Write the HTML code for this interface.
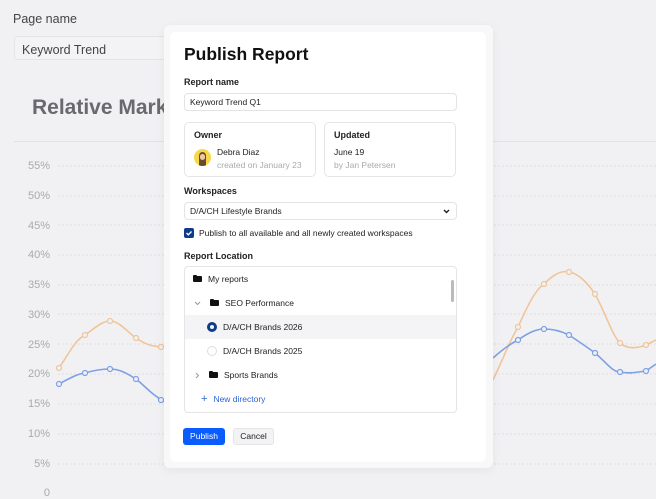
<!DOCTYPE html>
<html><head><meta charset="utf-8"><style>
*{margin:0;padding:0;box-sizing:border-box}
body{width:656px;height:492px;overflow:hidden;background:#f1f1f4;font-family:"Liberation Sans",sans-serif;position:relative;color:#1a1a1a}
.abs{position:absolute}
.lbl{position:absolute;font-size:9px;font-weight:bold;color:#222}
.ylab{position:absolute;left:26px;width:24px;text-align:right;font-size:11px;color:#aaa}
.frame{position:absolute;left:164px;top:25px;width:329px;height:443px;background:#f8f8f9;border-radius:6px;box-shadow:0 2px 10px rgba(0,0,0,.06)}
.modal{position:absolute;left:170px;top:32px;width:316px;height:430px;background:#fff;border-radius:5px}
.inp{position:absolute;border:1px solid #e3e3e6;border-radius:4px;font-size:8.5px;color:#222;padding-left:5px;display:flex;align-items:center}
.card{position:absolute;border:1px solid #e5e5e8;border-radius:5px}
.row{position:absolute;left:0;width:272px;height:24px;font-size:8.5px;color:#222;display:flex;align-items:center}
.fold{display:inline-block;width:9px;height:6px;background:#111;border-radius:1px;margin-right:6px;position:relative}
.fold:before{content:"";position:absolute;left:0;top:-1.5px;width:4px;height:2px;background:#111;border-radius:1px 1px 0 0}
</style></head><body>
<div class="abs" style="left:13px;top:12px;font-size:12.5px;color:#444">Page name</div>
<div class="abs" style="left:14px;top:36px;width:160px;height:24px;border:1px solid #e4e4e7;border-radius:4px;background:#f3f3f5;font-size:12.5px;color:#444;padding:6px 0 0 7px">Keyword Trend</div>
<div class="abs" style="left:32px;top:96px;font-size:21px;font-weight:bold;color:#6a6a6e">Relative Market</div>
<div class="abs" style="left:14px;top:141px;width:642px;height:1px;background:#e2e2e6"></div>
<div class="ylab" style="top:160px">55%</div><div class="ylab" style="top:190px">50%</div><div class="ylab" style="top:220px">45%</div><div class="ylab" style="top:249px">40%</div><div class="ylab" style="top:279px">35%</div><div class="ylab" style="top:309px">30%</div><div class="ylab" style="top:339px">25%</div><div class="ylab" style="top:368px">20%</div><div class="ylab" style="top:398px">15%</div><div class="ylab" style="top:428px">10%</div><div class="ylab" style="top:458px">5%</div><div class="ylab" style="top:487px">0</div>
<svg class="abs" style="left:0;top:0" width="656" height="492">
<g stroke="#e0e0e4" stroke-width="1" stroke-dasharray="2 2">
<line x1="58" x2="656" y1="166" y2="166"/><line x1="58" x2="656" y1="196" y2="196"/><line x1="58" x2="656" y1="225" y2="225"/><line x1="58" x2="656" y1="255" y2="255"/><line x1="58" x2="656" y1="285" y2="285"/><line x1="58" x2="656" y1="314" y2="314"/><line x1="58" x2="656" y1="344" y2="344"/><line x1="58" x2="656" y1="374" y2="374"/><line x1="58" x2="656" y1="404" y2="404"/><line x1="58" x2="656" y1="434" y2="434"/><line x1="58" x2="656" y1="464" y2="464"/></g>
<g fill="none" stroke-width="1.6">
<path stroke="#efc59a" d="M59 368 C70 352 75 340 85 335 C95 328 102 321 110 321 C120 321 128 333 136 338 C145 344 152 347 165 347"/>
<path stroke="#7da0e4" d="M59 384 C70 378 77 374 85 373 C95 370 102 369 110 369 C120 369 128 374 136 379 C145 386 152 395 165 402"/>
<path stroke="#efc59a" d="M493 380 C505 355 510 340 518 327 C528 305 535 290 544 284 C552 276 560 270 569 272 C580 274 588 284 595 294 C605 312 612 335 620 343 C628 350 638 348 646 345 L656 340"/>
<path stroke="#7da0e4" d="M493 358 C502 350 510 344 518 340 C528 333 536 329 544 329 C553 329 561 331 569 335 C578 341 587 347 595 353 C605 361 612 372 620 372 C630 374 638 372 646 371 L656 364"/>
</g>
<g fill="#f1f1f4" stroke-width="1.2">
<g stroke="#efc59a"><circle cx="59" cy="368" r="2.5"/><circle cx="85" cy="335" r="2.5"/><circle cx="110" cy="321" r="2.5"/><circle cx="136" cy="338" r="2.5"/><circle cx="161" cy="347" r="2.5"/><circle cx="518" cy="327" r="2.5"/><circle cx="544" cy="284" r="2.5"/><circle cx="569" cy="272" r="2.5"/><circle cx="595" cy="294" r="2.5"/><circle cx="620" cy="343" r="2.5"/><circle cx="646" cy="345" r="2.5"/></g>
<g stroke="#7da0e4"><circle cx="59" cy="384" r="2.5"/><circle cx="85" cy="373" r="2.5"/><circle cx="110" cy="369" r="2.5"/><circle cx="136" cy="379" r="2.5"/><circle cx="161" cy="400" r="2.5"/><circle cx="518" cy="340" r="2.5"/><circle cx="544" cy="329" r="2.5"/><circle cx="569" cy="335" r="2.5"/><circle cx="595" cy="353" r="2.5"/><circle cx="620" cy="372" r="2.5"/><circle cx="646" cy="371" r="2.5"/></g>
</g></svg>
<div class="frame"></div>
<div class="modal">
<div class="abs" style="left:14px;top:12px;font-size:17.5px;font-weight:bold;color:#111">Publish Report</div>
<div class="lbl" style="left:14px;top:45px">Report name</div>
<div class="inp" style="left:14px;top:61px;width:273px;height:18px">Keyword Trend Q1</div>
<div class="card" style="left:14px;top:90px;width:132px;height:55px">
<div class="lbl" style="left:9px;top:7px">Owner</div>
<div class="abs" style="left:9px;top:26px;width:17px;height:17px;border-radius:50%;background:#f5d94a;overflow:hidden"><div class="abs" style="left:5px;top:3px;width:7px;height:14px;border-radius:4px 4px 0 0;background:#6b4a2e"></div><div class="abs" style="left:6px;top:5px;width:5px;height:6px;border-radius:3px;background:#f0c8a8"></div></div>
<div class="abs" style="left:32px;top:24px;font-size:8.5px;color:#222">Debra Diaz</div>
<div class="abs" style="left:32px;top:37px;font-size:8.5px;color:#aaa">created on January 23</div>
</div>
<div class="card" style="left:154px;top:90px;width:132px;height:55px">
<div class="lbl" style="left:9px;top:7px">Updated</div>
<div class="abs" style="left:9px;top:24px;font-size:8.5px;color:#222">June 19</div>
<div class="abs" style="left:9px;top:37px;font-size:8.5px;color:#aaa">by Jan Petersen</div>
</div>
<div class="lbl" style="left:14px;top:154px">Workspaces</div>
<div class="inp" style="left:14px;top:170px;width:273px;height:18px">D/A/CH Lifestyle Brands<svg class="abs" style="right:6px;top:6px" width="7" height="5"><path d="M1 1 L3.5 3.5 L6 1" fill="none" stroke="#222" stroke-width="1.4"/></svg></div>
<div class="abs" style="left:14px;top:196px;width:10px;height:10px;background:#0f3b8c;border-radius:2px"><svg width="10" height="10" style="display:block"><path d="M2.5 5 L4.3 6.8 L7.5 3.5" fill="none" stroke="#fff" stroke-width="1.4"/></svg></div>
<div class="abs" style="left:29px;top:196px;font-size:8.5px;color:#222">Publish to all available and all newly created workspaces</div>
<div class="lbl" style="left:14px;top:219px">Report Location</div>
<div class="card" style="left:14px;top:234px;width:273px;height:147px;overflow:hidden;border-radius:4px">
<div class="row" style="top:0"><span style="width:8px"></span><span class="fold"></span>My reports</div>
<div class="row" style="top:24px"><svg style="margin:0 9px 0 9px" width="7" height="5"><path d="M1 1 L3.5 3.5 L6 1" fill="none" stroke="#999" stroke-width="1"/></svg><span class="fold"></span>SEO Performance</div>
<div class="row" style="top:48px;background:#f4f4f6"><span style="margin-left:22px;margin-right:6px;width:10px;height:10px;border-radius:50%;border:3px solid #0f3b8c;display:inline-block"></span>D/A/CH Brands 2026</div>
<div class="row" style="top:72px"><span style="margin-left:22px;margin-right:6px;width:10px;height:10px;border-radius:50%;border:1px solid #ddd;display:inline-block"></span>D/A/CH Brands 2025</div>
<div class="row" style="top:96px"><svg style="margin:0 9px 0 10px" width="5" height="7"><path d="M1 1 L3.5 3.5 L1 6" fill="none" stroke="#999" stroke-width="1"/></svg><span class="fold"></span>Sports Brands</div>
<div class="row" style="top:120px;color:#2e64d6"><span style="margin-left:16px;margin-right:6px;font-size:11px">+</span>New directory</div>
<div class="abs" style="left:266px;top:13px;width:3px;height:22px;background:#bbb;border-radius:2px"></div>
</div>
<div class="abs" style="left:13px;top:396px;width:42px;height:17px;background:#0b5cff;border-radius:3px;color:#fff;font-size:8.5px;text-align:center;line-height:17px">Publish</div>
<div class="abs" style="left:63px;top:396px;width:41px;height:17px;background:#f3f3f5;border:1px solid #e5e5e8;border-radius:3px;color:#222;font-size:8.5px;text-align:center;line-height:15px">Cancel</div>
</div>
</body></html>
